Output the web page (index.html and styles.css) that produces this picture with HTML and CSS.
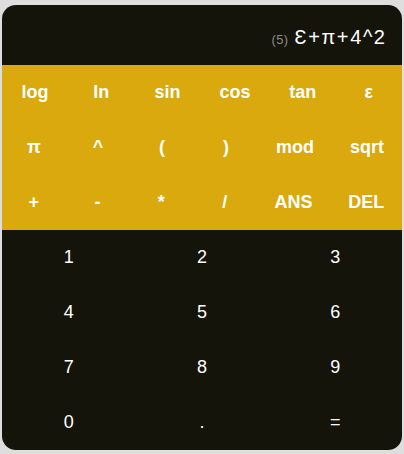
FILE: index.html
```html
<!DOCTYPE html>
<html>
<head>
<meta charset="utf-8">
<link rel="stylesheet" href="styles.css">
</head>
<body>
<div class="calc">
  <div class="display">
    <span class="count">(5)</span>
    <span class="expr">Ɛ+π+4^2</span>
  </div>
  <div class="funcs">
    <div class="row">
      <div class="key"><span class="lbl">log</span></div>
      <div class="key"><span class="lbl">ln</span></div>
      <div class="key"><span class="lbl">sin</span></div>
      <div class="key"><span class="lbl">cos</span></div>
      <div class="key"><span class="lbl">tan</span></div>
      <div class="key"><span class="lbl">ε</span></div>
    </div>
    <div class="row">
      <div class="key"><span class="lbl">π</span></div>
      <div class="key"><span class="lbl">^</span></div>
      <div class="key"><span class="lbl">(</span></div>
      <div class="key"><span class="lbl">)</span></div>
      <div class="key"><span class="lbl">mod</span></div>
      <div class="key"><span class="lbl">sqrt</span></div>
    </div>
    <div class="row">
      <div class="key"><span class="lbl">+</span></div>
      <div class="key"><span class="lbl">-</span></div>
      <div class="key"><span class="lbl">*</span></div>
      <div class="key"><span class="lbl">/</span></div>
      <div class="key"><span class="lbl">ANS</span></div>
      <div class="key"><span class="lbl">DEL</span></div>
    </div>
  </div>
  <div class="nums">
    <div class="key">1</div>
    <div class="key">2</div>
    <div class="key">3</div>
    <div class="key">4</div>
    <div class="key">5</div>
    <div class="key">6</div>
    <div class="key">7</div>
    <div class="key">8</div>
    <div class="key">9</div>
    <div class="key">0</div>
    <div class="key">.</div>
    <div class="key">=</div>
  </div>
</div>
</body>
</html>
```
FILE: styles.css
```css
html, body {
  margin: 0;
  padding: 0;
}
body {
  background: #dedede;
  padding: 5px 2px 0 2px;
  font-family: "Liberation Sans", Arial, sans-serif;
  height: 454px;
  box-sizing: border-box;
  overflow: hidden;
}
.calc {
  width: 400px;
  background: #15140b;
  border-radius: 14px;
  overflow: hidden;
  color: #fff;
}
.display {
  height: 60px;
  display: flex;
  align-items: baseline;
  justify-content: flex-end;
  padding: 21px 17px 0 0;
  gap: 6px;
  box-sizing: border-box;
}
.count {
  font-size: 13px;
  letter-spacing: 0.4px;
  color: #8a8a8a;
}
.expr {
  font-size: 20px;
  line-height: 23px;
  letter-spacing: 1.6px;
  margin-right: -1.6px;
}
.funcs {
  background: #d9a90e;
  font-weight: bold;
  font-size: 18px;
}
.row {
  display: flex;
  height: 55px;
}
.row .key {
  flex: 1 1 auto;
  padding: 0 4px;
}
.lbl {
  display: inline-block;
  min-width: 28px;
  text-align: center;
}
.nums {
  display: grid;
  grid-template-columns: repeat(3, 1fr);
  grid-auto-rows: 55px;
  font-size: 18px;
}
.key {
  display: flex;
  align-items: center;
  justify-content: center;
}
```
